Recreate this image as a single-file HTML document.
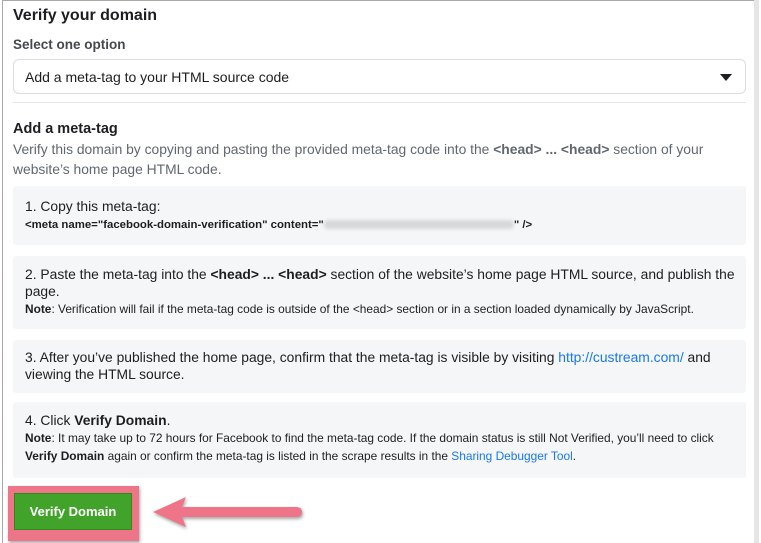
<!DOCTYPE html>
<html><head><meta charset="utf-8"><style>
*{margin:0;padding:0;box-sizing:border-box}
body{width:761px;height:543px;overflow:hidden;background:#fff;font-family:"Liberation Sans",Arial,sans-serif;color:#1c1e21;position:relative}
.frame{position:absolute;left:2px;top:0;width:757px;height:543px;border-left:1px solid #a8a8a8;border-top:1px solid #a8a8a8}
.sb{position:absolute;left:754px;top:0;width:5px;height:543px;background:#e6e6e6}
.abs{position:absolute}
h1{position:absolute;left:13px;top:7px;font-size:16px;font-weight:bold}
.lbl{position:absolute;left:13px;top:37px;font-size:13.5px;font-weight:bold;color:#444950}
.sel{position:absolute;left:13px;top:59px;width:733px;height:35px;border:1px solid #dadde1;border-radius:6px;font-size:14px;padding:9px 11px}
.tri{position:absolute;right:13px;top:14px;width:0;height:0;border-left:6px solid transparent;border-right:6px solid transparent;border-top:7px solid #1c1e21}
.hr{position:absolute;left:13px;top:102px;width:733px;height:1px;background:#e4e6eb}
h2{position:absolute;left:13px;top:121px;font-size:14.5px;font-weight:bold}
.desc{position:absolute;left:13px;top:139px;width:733px;font-size:13.85px;line-height:20px;color:#606770}
.box{position:absolute;left:13px;width:733px;background:#f5f6f7;border-radius:3px;padding:0 4px 0 12px;font-size:13.85px;line-height:17px}
.note{font-size:11.9px;line-height:18px}
a{color:#1877f2;text-decoration:none}
.blur{display:inline-block;width:190px;height:9px;background:#d6d8dc;vertical-align:middle;border-radius:4px;filter:blur(1.5px)}
.btnw{position:absolute;left:8px;top:486px;width:131px;height:55px;background:#ee7488;box-shadow:1px 2px 3px rgba(0,0,0,.35)}
.btn{position:absolute;left:6px;top:7px;width:118px;height:37px;background:#42a32b;border:1px solid #2f8a1f;color:#fff;font-weight:bold;font-size:13px;text-align:center;line-height:35px}
</style></head><body>
<div class="frame"></div><div class="sb"></div>
<h1>Verify your domain</h1>
<div class="lbl">Select one option</div>
<div class="sel">Add a meta-tag to your HTML source code<div class="tri"></div></div>
<div class="hr"></div>
<h2>Add a meta-tag</h2>
<div class="desc">Verify this domain by copying and pasting the provided meta-tag code into the <b>&lt;head&gt; ... &lt;head&gt;</b> section of your website’s home page HTML code.</div>
<div class="box" style="top:186px;height:59px;padding-top:12px">1. Copy this meta-tag:<br><span class="note" style="font-weight:bold;font-size:11.4px">&lt;meta name="facebook-domain-verification" content="<span class="blur"></span>" /&gt;</span></div>
<div class="box" style="top:256px;height:73px;padding-top:10px">2. Paste the meta-tag into the <b>&lt;head&gt; ... &lt;head&gt;</b> section of the website’s home page HTML source, and publish the page.<br><span class="note"><b>Note</b>: Verification will fail if the meta-tag code is outside of the &lt;head&gt; section or in a section loaded dynamically by JavaScript.</span></div>
<div class="box" style="top:340px;height:53px;padding-top:9px">3. After you’ve published the home page, confirm that the meta-tag is visible by visiting <a>http://custream.com/</a> and viewing the HTML source.</div>
<div class="box" style="top:402px;height:76px;padding-top:10px">4. Click <b>Verify Domain</b>.<br><span class="note"><b>Note</b>: It may take up to 72 hours for Facebook to find the meta-tag code. If the domain status is still Not Verified, you’ll need to click<br><b>Verify Domain</b> again or confirm the meta-tag is listed in the scrape results in the <a>Sharing Debugger Tool</a>.</span></div>
<div class="btnw"><div class="btn">Verify Domain</div></div>
<svg class="abs" style="left:148px;top:494px" width="160" height="40" viewBox="0 0 160 40">
<g filter="drop-shadow(1px 2px 1.5px rgba(0,0,0,.35))">
<path d="M5 18 L38 3 L34 13 L148 13 Q154 13 154 18 Q154 23 148 23 L34 23 L38 33 Z" fill="#ee7488"/>
</g></svg>
</body></html>
